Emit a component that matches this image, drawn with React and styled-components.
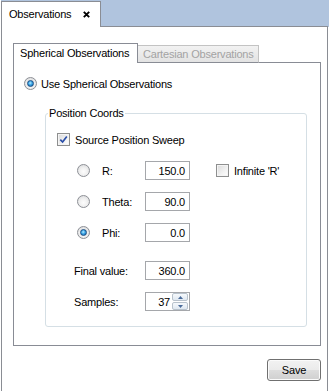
import React from "react";
import styled, { createGlobalStyle } from "styled-components";

const Global = createGlobalStyle`
  html, body { margin: 0; padding: 0; background: #ffffff; }
  body {
    font-family: "Liberation Sans", Arial, sans-serif;
    font-size: 11px;
    letter-spacing: -0.2px;
    color: #000000;
  }
`;

const Root = styled.div`
  width: 329px;
  height: 391px;
  box-sizing: border-box;
  padding-left: 1px;
  display: flex;
  flex-direction: column;
  background: #ffffff;
`;

const TopBar = styled.div`
  display: flex;
  align-items: flex-end;
  height: 27px;
  background: #b0c4de;
`;

const DocTab = styled.div`
  box-sizing: border-box;
  width: 100px;
  height: 26px;
  background: #ffffff;
  border: 1px solid #8a8d94;
  border-bottom: none;
  display: flex;
  align-items: center;
  padding: 0 0 1px 7px;
  gap: 12px;
`;

const TopFill = styled.div`
  flex: 1;
  height: 27px;
  box-sizing: border-box;
  border-bottom: 1px solid #8a8d94;
  margin-right: 1px;
`;

const Panel = styled.div`
  box-sizing: border-box;
  width: 327px;
  flex: 1;
  border-left: 1px solid #8a8d94;
  border-right: 1px solid #8a8d94;
  padding: 16px 6px 0 11px;
  display: flex;
  flex-direction: column;
`;

const InnerTabBar = styled.div`
  display: flex;
  align-items: flex-end;
  height: 20px;
`;

const InnerTab = styled.div`
  box-sizing: border-box;
  height: ${(p) => (p.$active ? "20px" : "18px")};
  width: ${(p) => p.$w}px;
  display: flex;
  align-items: center;
  padding: ${(p) => (p.$active ? "0 0 2px 6px" : "0 0 1px 5px")};
  white-space: nowrap;
  color: ${(p) => (p.$active ? "#000000" : "#a3a3a3")};
  background: ${(p) =>
    p.$active ? "#ffffff" : "linear-gradient(#f2f2f2, #e3e3e3)"};
  border: 1px solid ${(p) => (p.$active ? "#898c95" : "#c3c3c3")};
  border-left: ${(p) => (p.$active ? "1px solid #898c95" : "none")};
  border-bottom: ${(p) => (p.$active ? "none" : "1px solid #898c95")};
`;

const InnerFill = styled.div`
  flex: 1;
  height: 1px;
  background: #898c95;
`;

const Pane = styled.div`
  box-sizing: border-box;
  border: 1px solid #898c95;
  border-top: none;
  padding: 14px 13px 18px 10px;
  display: flex;
  flex-direction: column;
`;

const OptionRow = styled.label`
  display: flex;
  align-items: center;
  gap: ${(p) => p.$gap ?? 5}px;
  height: 13px;
  margin-left: ${(p) => p.$indent ?? 0}px;
  white-space: nowrap;
`;

const Radio = styled.span`
  box-sizing: border-box;
  width: 13px;
  height: 13px;
  flex: none;
  border-radius: 50%;
  border: 1px solid #8d9096;
  background: radial-gradient(circle at 50% 60%, #fdfdfd 0%, #f0f0f0 45%, #d3d4d6 100%);
  display: flex;
  align-items: center;
  justify-content: center;
  &::after {
    content: "";
    display: ${(p) => (p.$checked ? "block" : "none")};
    width: 7px;
    height: 7px;
    border-radius: 50%;
    box-sizing: border-box;
    border: 1px solid #1b4f84;
    background: radial-gradient(circle at 45% 40%, #b9ecff 0%, #3aa5e6 45%, #135ea6 100%);
  }
`;

const Check = styled.span`
  box-sizing: border-box;
  width: 13px;
  height: 13px;
  flex: none;
  border: 1px solid #8e8f8f;
  background: linear-gradient(135deg, #d9d9d9 0%, #f2f2f2 60%, #ffffff 100%);
  box-shadow: inset 0 0 0 1px #f4f4f4;
  display: flex;
  align-items: center;
  justify-content: center;
`;

const Group = styled.fieldset`
  margin: 17px 0 0 21px;
  padding: 0;
  border: 1px solid #d5dfe5;
  border-radius: 3px;
  min-width: 0;
`;

const Legend = styled.legend`
  margin-left: 2px;
  padding: 0 1px;
  line-height: 13px;
  font-size: 11px;
`;

const GroupBody = styled.div`
  display: flex;
  flex-direction: column;
  padding: 13px 0 15px 11px;
`;

const FieldRow = styled.div`
  display: flex;
  align-items: center;
  height: 19px;
  margin-top: ${(p) => p.$top}px;
  padding-left: ${(p) => p.$indent}px;
`;

const RadioSlot = styled.span`
  display: flex;
  margin-right: 12px;
`;

const FieldLabel = styled.span`
  width: ${(p) => p.$w}px;
  flex: none;
  white-space: nowrap;
`;

const Input = styled.div`
  box-sizing: border-box;
  width: 45px;
  height: 19px;
  border: 1px solid #a5a7ab;
  background: #ffffff;
  display: flex;
  align-items: center;
  justify-content: flex-end;
  padding-right: ${(p) => p.$pr ?? 4}px;
  flex: none;
`;

const SideOption = styled(OptionRow)`
  margin-left: 26px;
  gap: 5px;
`;

const SpinWrap = styled.div`
  box-sizing: border-box;
  width: 45px;
  height: 19px;
  border: 1px solid #a5a7ab;
  background: #ffffff;
  display: flex;
  align-items: stretch;
  flex: none;
`;

const SpinValue = styled.span`
  flex: 1;
  display: flex;
  align-items: center;
  justify-content: flex-end;
  padding-right: 2px;
`;

const SpinButtons = styled.div`
  width: 16px;
  display: flex;
  flex-direction: column;
  gap: 1px;
  padding: 0 1px 0 0;
`;

const SpinBtn = styled.div`
  flex: 1;
  box-sizing: border-box;
  border: 1px solid #b8c2cc;
  border-radius: 2px;
  background: linear-gradient(#f6f9fc, #dfe8f1);
  display: flex;
  align-items: center;
  justify-content: center;
`;

const Footer = styled.div`
  display: flex;
  justify-content: flex-end;
  margin-top: 13px;
`;

const Button = styled.button`
  box-sizing: border-box;
  width: 54px;
  height: 22px;
  border: 1px solid #707070;
  border-radius: 3px;
  background: linear-gradient(#f2f2f2 0%, #ebebeb 48%, #dddddd 52%, #cfcfcf 100%);
  box-shadow: inset 0 0 0 1px #fbfbfb;
  font-family: "Liberation Sans", Arial, sans-serif;
  font-size: 11px;
  letter-spacing: -0.2px;
  color: #000000;
  padding: 0 0 1px 0;
`;

const CloseIcon = () => (
  <svg width="7" height="7" viewBox="0 0 7 7">
    <path d="M0.8 0.8 L6.2 6.2 M6.2 0.8 L0.8 6.2" stroke="#000" strokeWidth="1.9" />
  </svg>
);

const CheckMark = () => (
  <svg width="9" height="9" viewBox="0 0 9 9">
    <path d="M1.3 4.6 L3.6 7 L7.8 1.4" fill="none" stroke="#2a4ea8" strokeWidth="1.7" />
  </svg>
);

const Arrow = ({ up }) => (
  <svg width="5" height="3" viewBox="0 0 5 3">
    <path d={up ? "M0 3 L2.5 0 L5 3 Z" : "M0 0 L2.5 3 L5 0 Z"} fill="#4a6b9a" />
  </svg>
);

const coordRows = [
  { label: "R:", value: "150.0", checked: false, top: 15, side: true },
  { label: "Theta:", value: "90.0", checked: false, top: 12 },
  { label: "Phi:", value: "0.0", checked: true, top: 12 },
];

export default function App() {
  return (
    <Root>
      <Global />
      <TopBar>
        <DocTab>
          <span>Observations</span>
          <CloseIcon />
        </DocTab>
        <TopFill />
      </TopBar>
      <Panel>
        <InnerTabBar>
          <InnerTab $active $w={125}>Spherical Observations</InnerTab>
          <InnerTab $w={121}>Cartesian Observations</InnerTab>
          <InnerFill />
        </InnerTabBar>
        <Pane>
          <OptionRow $gap={4}>
            <Radio $checked />
            <span>Use Spherical Observations</span>
          </OptionRow>
          <Group>
            <Legend>Position Coords</Legend>
            <GroupBody>
              <OptionRow>
                <Check>
                  <CheckMark />
                </Check>
                <span>Source Position Sweep</span>
              </OptionRow>
              {coordRows.map((r) => (
                <FieldRow key={r.label} $top={r.top} $indent={20}>
                  <RadioSlot>
                    <Radio $checked={r.checked} />
                  </RadioSlot>
                  <FieldLabel $w={43}>{r.label}</FieldLabel>
                  <Input>{r.value}</Input>
                  {r.side && (
                    <SideOption>
                      <Check />
                      <span>Infinite 'R'</span>
                    </SideOption>
                  )}
                </FieldRow>
              ))}
              <FieldRow $top={19} $indent={17}>
                <FieldLabel $w={71}>Final value:</FieldLabel>
                <Input>360.0</Input>
              </FieldRow>
              <FieldRow $top={12} $indent={17}>
                <FieldLabel $w={71}>Samples:</FieldLabel>
                <SpinWrap>
                  <SpinValue>37</SpinValue>
                  <SpinButtons>
                    <SpinBtn>
                      <Arrow up />
                    </SpinBtn>
                    <SpinBtn>
                      <Arrow />
                    </SpinBtn>
                  </SpinButtons>
                </SpinWrap>
              </FieldRow>
            </GroupBody>
          </Group>
        </Pane>
        <Footer>
          <Button>Save</Button>
        </Footer>
      </Panel>
    </Root>
  );
}
